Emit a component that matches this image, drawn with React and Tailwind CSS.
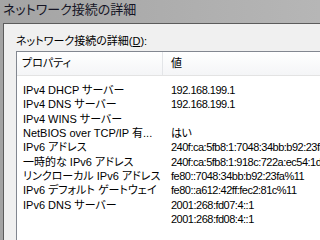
import React from 'react';

// 詳細一覧の行データ
const rows = [
  ['IPv4 DHCP サーバー', '192.168.199.1'],
  ['IPv4 DNS サーバー', '192.168.199.1'],
  ['IPv4 WINS サーバー', ''],
  ['NetBIOS over TCP/IP 有...', 'はい'],
  ['IPv6 アドレス', '240f:ca:5fb8:1:7048:34bb:b92:23fa'],
  ['一時的な IPv6 アドレス', '240f:ca:5fb8:1:918c:722a:ec54:1d2b'],
  ['リンクローカル IPv6 アドレス', 'fe80::7048:34bb:b92:23fa%11'],
  ['IPv6 デフォルト ゲートウェイ', 'fe80::a612:42ff:fec2:81c%11'],
  ['IPv6 DNS サーバー', '2001:268:fd07:4::1'],
  ['', '2001:268:fd08:4::1'],
];

const font = { fontFamily: '"Liberation Sans", "Noto Sans CJK JP", sans-serif' };

const App = () => {
  return (
    <div
      className="w-[320px] h-[240px] overflow-hidden flex flex-col bg-gradient-to-r from-[#a4a4a4] to-[#b6b6b6] text-black [font-feature-settings:'palt']"
      style={font}
    >
      {/* タイトルバー */}
      <div className="h-[23px] shrink-0 pl-[3px] pt-[2px] text-[13px] leading-[16px] text-[#151525] whitespace-nowrap">
        ネットワーク接続の詳細
      </div>

      {/* ウィンドウ本体 */}
      <div className="flex-1 ml-[3px] border-l border-t border-[#5c5c5c] bg-[#f0f0f0] pl-[12px] pt-[10px] overflow-hidden">
        <div className="text-[11px] leading-[14px] mb-[3px] whitespace-nowrap">
          ネットワーク接続の詳細(<span className="underline">D</span>):
        </div>

        {/* リストビュー */}
        <div className="w-[400px] h-[300px] border-l border-t border-[#828790] bg-white">
          <div className="h-[24px] flex border-b border-[#e3e3e3] bg-gradient-to-b from-white to-[#f4f5f7] text-[11px]">
            <div className="w-[146px] shrink-0 pl-[5px] flex items-center border-r border-[#e3e5e8]">プロパティ</div>
            <div className="pl-[8px] flex items-center">値</div>
          </div>
          <div className="pt-[7px] text-[11px]">
            {rows.map(([name, value], i) => (
              <div key={i} className="h-[14.33px] leading-[14.33px] flex whitespace-nowrap">
                <div className="w-[146px] shrink-0 pl-[6px] overflow-hidden">{name}</div>
                <div className="pl-[8px] tracking-[-0.5px]">{value}</div>
              </div>
            ))}
          </div>
        </div>
      </div>
    </div>
  );
};

export default App;
